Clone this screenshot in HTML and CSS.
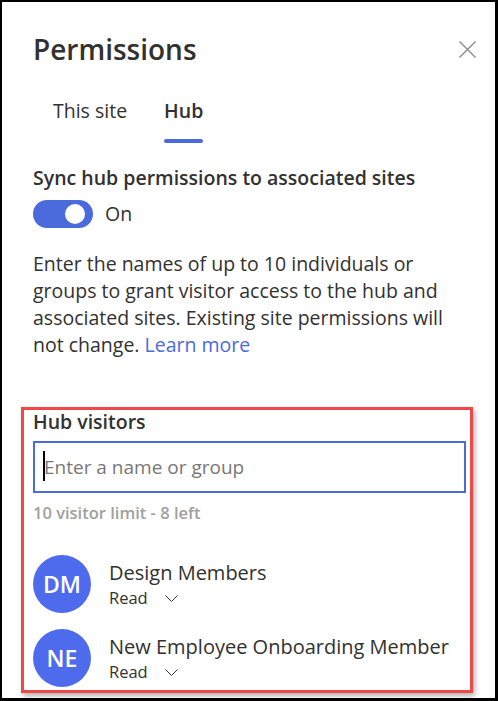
FILE: index.html
```html
<!DOCTYPE html>
<html lang="en">
<head>
    <meta charset="UTF-8">
    <meta name="viewport" content="width=device-width, initial-scale=1.0">
    <title>Permissions</title>
    <link rel="stylesheet" href="styles.css">
</head>
<body>
    <div class="panel">
        <div class="panel-header">
            <h1>Permissions</h1>
            <button class="close" aria-label="Close">
                <svg width="17" height="17" viewBox="0 0 17 17">
                    <path d="M0.5 0.5 L16.5 16.5 M16.5 0.5 L0.5 16.5" stroke="#8a8886" stroke-width="1.3" fill="none"/>
                </svg>
            </button>
        </div>

        <div class="tabs">
            <span class="tab">This site</span>
            <span class="tab active">Hub</span>
        </div>

        <h2 class="sync-title">Sync hub permissions to associated sites</h2>
        <div class="toggle-row">
            <span class="toggle"><span class="knob"></span></span>
            <span>On</span>
        </div>

        <p class="info">
            Enter the names of up to 10 individuals or groups to grant visitor access to the hub and
            associated sites. Existing site permissions will not change. <a href="#">Learn more</a>
        </p>

        <!-- hub visitors picker -->
        <div class="visitors">
            <label class="visitors-label" for="visitor">Hub visitors</label>
            <div class="picker">
                <span class="caret"></span>
                <input type="text" id="visitor" placeholder="Enter a name or group">
            </div>
            <div class="limit">10 visitor limit - 8 left</div>

            <div class="persona">
                <div class="avatar">DM</div>
                <div class="persona-text">
                    <div class="persona-name">Design Members</div>
                    <div class="persona-role">Read
                        <svg width="13" height="7" viewBox="0 0 13 7"><path d="M0.5 0.5 L6.5 6.5 L12.5 0.5" stroke="#323130" stroke-width="1" fill="none"/></svg>
                    </div>
                </div>
            </div>
            <div class="persona">
                <div class="avatar">NE</div>
                <div class="persona-text">
                    <div class="persona-name">New Employee Onboarding Members</div>
                    <div class="persona-role">Read
                        <svg width="13" height="7" viewBox="0 0 13 7"><path d="M0.5 0.5 L6.5 6.5 L12.5 0.5" stroke="#323130" stroke-width="1" fill="none"/></svg>
                    </div>
                </div>
            </div>
        </div>
    </div>
</body>
</html>
```

FILE: styles.css
```css
body {
    margin: 0;
    font-family: "Open Sans", "Noto Sans", sans-serif;
    color: #323130;
    background: #fff;
}

.panel {
    box-sizing: border-box;
    width: 498px;
    height: 701px;
    border-style: solid;
    border-color: #000;
    border-width: 2px 3px 3px 2px;
    padding: 31px 29px 0 31px;
    overflow: hidden;
}

.panel-header {
    display: flex;
    justify-content: space-between;
    align-items: center;
}

h1 {
    margin: 0;
    font-size: 28px;
    line-height: 32px;
    font-weight: 600;
}

.close {
    border: none;
    background: none;
    padding: 0;
    margin-right: -10px;
    width: 17px;
    height: 17px;
    display: flex;
}

.tabs {
    display: flex;
    gap: 37px;
    margin-top: 34px;
    margin-left: 20px;
}

.tab {
    position: relative;
    font-size: 19.5px;
    line-height: 24px;
    padding-bottom: 20px;
}

.tab.active {
    font-weight: 600;
}

.tab.active::after {
    content: "";
    position: absolute;
    left: 0;
    right: 0;
    bottom: 0;
    height: 4px;
    border-radius: 2px;
    background: #4b6bdc;
}

.sync-title {
    margin: 23px 0 0;
    font-size: 19.5px;
    line-height: 24px;
    font-weight: 600;
}

.toggle-row {
    display: flex;
    align-items: center;
    gap: 12px;
    margin-top: 10px;
    font-size: 19.5px;
    line-height: 28px;
}

.toggle {
    box-sizing: border-box;
    width: 60px;
    height: 28px;
    border-radius: 14px;
    background: #4b6bdc;
    display: flex;
    justify-content: flex-end;
    align-items: center;
    padding-right: 8px;
}

.knob {
    width: 20px;
    height: 20px;
    border-radius: 50%;
    background: #fff;
}

.info {
    margin: 22px 0 0;
    font-size: 19.5px;
    line-height: 27px;
}

.info a {
    color: #4b6bdc;
    text-decoration: none;
}

.visitors {
    margin: 49px -7px 0 -12px;
    padding: 0 4px 0 9px;
    border: 3px solid #f04848;
    box-shadow: 2px 3px 5px rgba(0, 0, 0, 0.3);
    height: 286px;
    box-sizing: border-box;
}

.visitors-label {
    display: block;
    font-size: 19.5px;
    line-height: 24px;
    font-weight: 600;
}

.picker {
    position: relative;
    margin-top: 7px;
    height: 52px;
    box-sizing: border-box;
    border: 2px solid #4b6bdc;
    display: flex;
    align-items: center;
    padding-left: 9px;
}

.caret {
    position: absolute;
    left: 8px;
    top: 8px;
    width: 2px;
    height: 30px;
    background: #000;
}

.picker input {
    border: none;
    outline: none;
    width: 100%;
    padding: 0;
    font-family: inherit;
    font-size: 19px;
    color: #323130;
}

.picker input::placeholder {
    color: #797775;
}

.limit {
    margin-top: 10px;
    font-size: 16.5px;
    line-height: 20px;
    font-weight: 600;
    color: #a19f9d;
}

.persona {
    display: flex;
    align-items: flex-start;
    gap: 18px;
    margin-top: 32px;
}

.persona + .persona {
    margin-top: 16px;
}

.avatar {
    flex: none;
    width: 58px;
    height: 58px;
    border-radius: 50%;
    background: #4f6bed;
    color: #fff;
    display: flex;
    justify-content: center;
    align-items: center;
    font-size: 23px;
    font-weight: 600;
}

.persona-text {
    flex: 1;
    min-width: 0;
    margin-right: 16px;
    padding-top: 6px;
}

/* long names are clipped at the column edge, descenders kept */
.persona-name {
    font-size: 20px;
    line-height: 24px;
    padding-bottom: 4px;
    margin-bottom: -4px;
    white-space: nowrap;
    overflow: hidden;
}

.persona-role {
    margin-top: 2px;
    font-size: 16.5px;
    line-height: 22px;
    display: flex;
    align-items: center;
    gap: 17px;
}
```
